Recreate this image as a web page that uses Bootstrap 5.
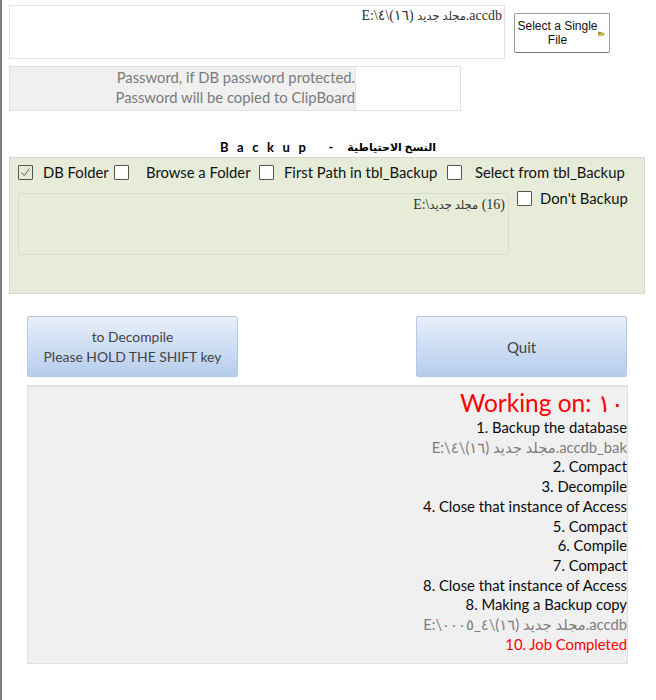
<!DOCTYPE html>
<html lang="en">
<head>
  <meta charset="UTF-8" />
  <meta name="viewport" content="width=device-width, initial-scale=1" />
  <title>Compact and Decompile</title>
  <link href="https://cdn.jsdelivr.net/npm/bootstrap@5.3.3/dist/css/bootstrap.min.css" rel="stylesheet">
  <style>
    body {
      font-family: "Lato", "DejaVu Sans", sans-serif;
      background-color: #fff;
    }
    .form-page {
      width: 656px;
      height: 700px;
      border-left: 2px solid #7f7f7f;
      padding: 5px 0 0 7px;
      font-size: 14.8px;
      color: #111;
    }
    .serif-path {
      font-family: "Liberation Serif", "DejaVu Sans", serif;
      font-size: 14px;
      color: #333;
      line-height: 16px;
    }
    .ar-small { font-size: 11.5px; }
    .file-box {
      width: 496px;
      height: 54px;
      border: 1px solid #e3e3e3;
      padding: 2px 2px;
    }
    .single-btn {
      width: 96px;
      height: 40px;
      margin: 8px 0 0 9px;
      background: #fff;
      border: 1px solid #9a9a9a;
      border-bottom-color: #7a7a7a;
      border-radius: 2px;
      font-family: "Liberation Sans", sans-serif;
      font-size: 12px;
      line-height: 14px;
      color: #111;
      padding: 0 4px 0 2px;
    }
    .single-btn svg { flex: none; margin-top: 1px; }
    .pass-row {
      width: 452px;
      height: 45px;
      margin-top: 7px;
      border: 1px solid #e0e0e0;
    }
    .pass-hint {
      width: 346px;
      background-color: #f0f0f0;
      border-right: 1px solid #e3e3e3;
      color: #7a7a7a;
      line-height: 20px;
      text-align: right;
      padding: 0;
    }
    .backup-title {
      width: 638px;
      margin-top: 26px;
      height: 20px;
      font-size: 13px;
      line-height: 20px;
      font-weight: 700;
      color: #000;
      gap: 14px;
    }
    .spaced { letter-spacing: 8.6px; }
    .title-ar { font-size: 11px; }
    .green-panel {
      width: 636px;
      height: 137px;
      margin-top: 0;
      background-color: #e6ecd8;
      border: 1px solid #d6d9cd;
      padding: 7px 8px;
    }
    .tick {
      width: 15px;
      height: 15px;
      flex: none;
      background: #fff;
      border: 1px solid #555;
      border-radius: 1px;
      display: block;
    }
    .tick-on { background: none; }
    .opt-row { height: 15px; line-height: 15px; white-space: nowrap; }
    .opt-db { width: 96px; gap: 10px; }
    .opt-browse { width: 145px; gap: 17px; }
    .opt-first { width: 188px; gap: 10px; }
    .opt-select { gap: 13px; }
    .lower-row { margin-top: 13px; }
    .folder-box {
      width: 491px;
      height: 62px;
      border: 1px solid #d8dccd;
      padding: 3px 3px;
      color: #333;
    }
    .dont-opt { margin: -2px 0 0 8px; line-height: 15px; gap: 8px; white-space: nowrap; }
    .action-row { width: 600px; margin: 22px 0 0 18px; }
    .grad-btn {
      width: 211px;
      height: 61px;
      background: linear-gradient(#e7effb, #b6cded);
      border: 1px solid #b5cae8;
      border-radius: 2px;
      color: #444;
      font-size: 15px;
      line-height: 20px;
      padding: 0;
    }
    .shift-btn { font-size: 13.9px; }
    .log-panel {
      width: 601px;
      height: 279px;
      margin: 8px 0 0 18px;
      background-color: #f0f0f0;
      border: 1px solid #e0e0e0;
      border-top-width: 2px;
      text-align: right;
      line-height: 19.7px;
      color: #0a0a0a;
    }
    .log-head {
      font-size: 24.5px;
      line-height: 30px;
      color: #f00;
      padding: 1px 3px 0 0;
    }
    .log-grey { color: #7d7d7d; }
    .log-red { color: #f00; }
  </style>
</head>

<body>
  <div class="form-page">
    <!-- File -->
    <div class="d-flex align-items-start">
      <div class="file-box serif-path text-end" dir="ltr">E:\<bdi>٤</bdi>\(<bdi>١٦</bdi>) <bdi class="ar-small">مجلد جديد</bdi>.accdb</div>
      <button type="button" class="single-btn d-flex align-items-center">
        <span class="flex-grow-1 text-center">Select a Single File</span>
        <svg width="7" height="5" viewBox="0 0 8 6"><path d="M0 1h3l1 1h3v4H0z" fill="#8c8a2c"/><path d="M2 3h6L7 6H0z" fill="#c9c24e"/></svg>
      </button>
    </div>

    <!-- Password -->
    <div class="pass-row d-flex">
      <div class="pass-hint">Password, if DB password protected.<br>Password will be copied to ClipBoard</div>
    </div>

    <div class="backup-title d-flex justify-content-center">
      <span class="spaced">Backup</span><span>-</span><span class="title-ar" dir="rtl">النسخ الاحتياطية</span>
    </div>

    <!-- Backup options -->
    <div class="green-panel">
      <div class="opt-row d-flex align-items-center">
        <div class="opt-db d-flex align-items-center">
          <svg class="tick tick-on" viewBox="0 0 15 15"><path d="M3 7.5l3 3.5 6-8" fill="none" stroke="#444" stroke-width="1"/></svg>
          <span>DB Folder</span>
        </div>
        <div class="opt-browse d-flex align-items-center"><span class="tick"></span><span>Browse a Folder</span></div>
        <div class="opt-first d-flex align-items-center"><span class="tick"></span><span>First Path in tbl_Backup</span></div>
        <div class="opt-select d-flex align-items-center"><span class="tick"></span><span>Select from tbl_Backup</span></div>
      </div>
      <div class="lower-row d-flex align-items-start">
        <div class="folder-box serif-path text-end" dir="rtl">(16) <span class="ar-small">مجلد جديد</span>\:E</div>
        <div class="dont-opt d-flex align-items-center"><span class="tick"></span><span>Don't Backup</span></div>
      </div>
    </div>

    <div class="action-row d-flex justify-content-between">
      <button type="button" class="grad-btn shift-btn">to Decompile<br>Please HOLD THE SHIFT key</button>
      <button type="button" class="grad-btn">Quit</button>
    </div>

    <!-- Progress -->
    <div class="log-panel">
      <div class="log-head">Working on: ١٠</div>
      <div>1. Backup the database</div>
      <div class="log-grey" dir="ltr">E:\<bdi>٤</bdi>\(<bdi>١٦</bdi>) <bdi>مجلد جديد</bdi>.accdb_bak</div>
      <div>2. Compact</div>
      <div>3. Decompile</div>
      <div>4. Close that instance of Access</div>
      <div>5. Compact</div>
      <div>6. Compile</div>
      <div>7. Compact</div>
      <div>8. Close that instance of Access</div>
      <div>8. Making a Backup copy</div>
      <div class="log-grey" dir="ltr">E:\<bdi>٠٠٠٥</bdi>_<bdi>٤</bdi>\(<bdi>١٦</bdi>) <bdi>مجلد جديد</bdi>.accdb</div>
      <div class="log-red">10. Job Completed</div>
    </div>
  </div>

  <script src="https://cdn.jsdelivr.net/npm/bootstrap@5.3.3/dist/js/bootstrap.bundle.min.js"></script>
</body>
</html>
